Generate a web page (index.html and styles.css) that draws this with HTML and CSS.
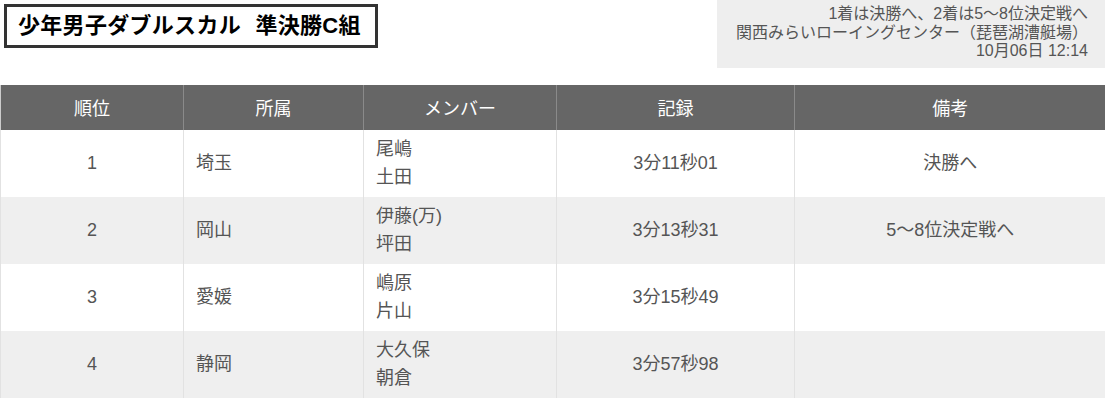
FILE: index.html
```html
<!DOCTYPE html>
<html lang="ja">
<head>
<meta charset="utf-8">
<link rel="stylesheet" href="styles.css">
</head>
<body>
<div class="top">
  <h1 class="title">少年男子ダブルスカル 準決勝C組</h1>
  <div class="info">
    <div class="info-line">1着は決勝へ、2着は5〜8位決定戦へ</div>
    <div class="info-line">関西みらいローイングセンター（琵琶湖漕艇場）</div>
    <div class="info-line">10月06日 12:14</div>
  </div>
</div>
<table class="results">
  <colgroup>
    <col class="c-rank">
    <col class="c-team">
    <col class="c-member">
    <col class="c-time">
    <col class="c-note">
  </colgroup>
  <thead>
    <tr><th>順位</th><th>所属</th><th>メンバー</th><th>記録</th><th>備考</th></tr>
  </thead>
  <tbody>
    <tr><td class="center">1</td><td>埼玉</td><td>尾嶋<br>土田</td><td class="center">3分11秒01</td><td class="center">決勝へ</td></tr>
    <tr><td class="center">2</td><td>岡山</td><td>伊藤(万)<br>坪田</td><td class="center">3分13秒31</td><td class="center">5〜8位決定戦へ</td></tr>
    <tr><td class="center">3</td><td>愛媛</td><td>嶋原<br>片山</td><td class="center">3分15秒49</td><td class="center"></td></tr>
    <tr><td class="center">4</td><td>静岡</td><td>大久保<br>朝倉</td><td class="center">3分57秒98</td><td class="center"></td></tr>
  </tbody>
</table>
</body>
</html>
```

FILE: styles.css
```css
html, body {
  margin: 0;
  padding: 0;
  background: #fff;
  font-family: "Liberation Sans", "Noto Sans CJK JP", sans-serif;
}

.top {
  display: flex;
  justify-content: space-between;
  align-items: flex-start;
}

.title {
  margin: 4px 0 0 4px;
  box-sizing: border-box;
  width: 374px;
  height: 44px;
  border: 3px solid #333;
  padding: 0 0 0 11px;
  font-size: 22px;
  font-weight: bold;
  line-height: 37px;
  word-spacing: 8px;
  letter-spacing: 0.3px;
  color: #000;
  white-space: nowrap;
}

.info {
  width: 388px;
  box-sizing: border-box;
  background: #eeeeee;
  padding: 5px 17px 7px 0;
  text-align: right;
  font-size: 16px;
  color: #555;
}

.info-line {
  line-height: 18.5px;
  height: 18.5px;
  white-space: nowrap;
}

.results {
  margin-top: 17px;
  width: 1105px;
  border-collapse: collapse;
  table-layout: fixed;
  font-size: 18px;
}

.c-rank { width: 183px; }
.c-team { width: 180px; }
.c-member { width: 193px; }
.c-time { width: 238px; }
.c-note { width: 311px; }

.results th {
  background: #666;
  color: #fff;
  font-weight: normal;
  height: 45px;
  padding: 0;
  border-left: 1px solid #8a8a8a;
  text-align: center;
}

.results th:first-child {
  border-left: 1px solid #ccc;
}

.results td {
  color: #555;
  height: 67px;
  box-sizing: border-box;
  padding: 4px 12px;
  line-height: 28px;
  border-left: 1px solid #e2e2e2;
  text-align: left;
}

.results td.center {
  text-align: center;
}

.results tbody tr:nth-child(even) td {
  background: #efefef;
}
```
